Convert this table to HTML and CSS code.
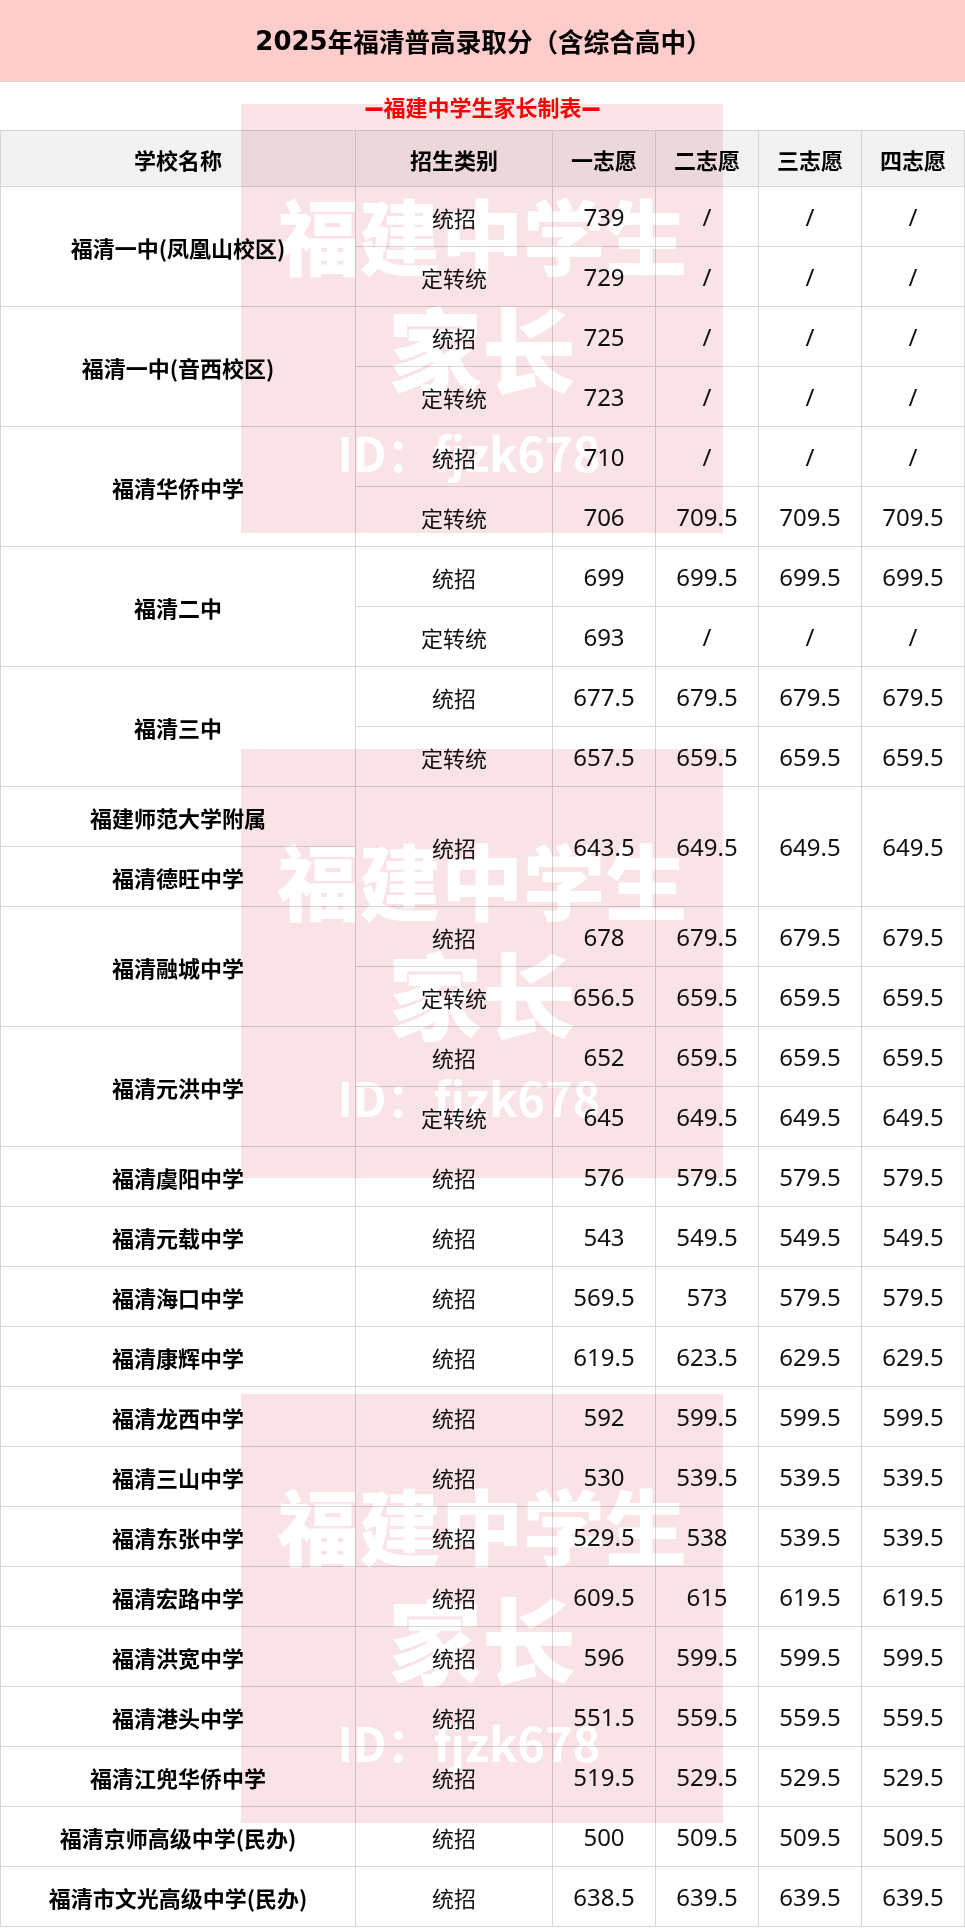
FILE: index.html
```html
<!DOCTYPE html>
<html lang="zh-CN">
<head>
<meta charset="utf-8">
<title>2025年福清普高录取分</title>
<link rel="stylesheet" href="styles.css">
</head>
<body>
<div class="page">
  <div class="title"><span class="title-num">2025</span>年福清普高录取分（含综合高中）</div>
  <div class="subtitle"><span class="dash">—</span>福建中学生家长制表<span class="dash">—</span></div>
  <table class="score">
    <colgroup>
      <col class="c-name"><col class="c-type"><col class="c-num"><col class="c-num"><col class="c-num"><col class="c-num">
    </colgroup>
    <thead>
      <tr><th>学校名称</th><th>招生类别</th><th>一志愿</th><th>二志愿</th><th>三志愿</th><th>四志愿</th></tr>
    </thead>
    <tbody>
      <tr><td class="name" rowspan="2">福清一中(凤凰山校区)</td><td>统招</td><td class="n">739</td><td class="n">/</td><td class="n">/</td><td class="n">/</td></tr>
      <tr><td>定转统</td><td class="n">729</td><td class="n">/</td><td class="n">/</td><td class="n">/</td></tr>
      <tr><td class="name" rowspan="2">福清一中(音西校区)</td><td>统招</td><td class="n">725</td><td class="n">/</td><td class="n">/</td><td class="n">/</td></tr>
      <tr><td>定转统</td><td class="n">723</td><td class="n">/</td><td class="n">/</td><td class="n">/</td></tr>
      <tr><td class="name" rowspan="2">福清华侨中学</td><td>统招</td><td class="n">710</td><td class="n">/</td><td class="n">/</td><td class="n">/</td></tr>
      <tr><td>定转统</td><td class="n">706</td><td class="n">709.5</td><td class="n">709.5</td><td class="n">709.5</td></tr>
      <tr><td class="name" rowspan="2">福清二中</td><td>统招</td><td class="n">699</td><td class="n">699.5</td><td class="n">699.5</td><td class="n">699.5</td></tr>
      <tr><td>定转统</td><td class="n">693</td><td class="n">/</td><td class="n">/</td><td class="n">/</td></tr>
      <tr><td class="name" rowspan="2">福清三中</td><td>统招</td><td class="n">677.5</td><td class="n">679.5</td><td class="n">679.5</td><td class="n">679.5</td></tr>
      <tr><td>定转统</td><td class="n">657.5</td><td class="n">659.5</td><td class="n">659.5</td><td class="n">659.5</td></tr>
      <tr><td class="name">福建师范大学附属</td><td rowspan="2">统招</td><td class="n" rowspan="2">643.5</td><td class="n" rowspan="2">649.5</td><td class="n" rowspan="2">649.5</td><td class="n" rowspan="2">649.5</td></tr>
      <tr><td class="name">福清德旺中学</td></tr>
      <tr><td class="name" rowspan="2">福清融城中学</td><td>统招</td><td class="n">678</td><td class="n">679.5</td><td class="n">679.5</td><td class="n">679.5</td></tr>
      <tr><td>定转统</td><td class="n">656.5</td><td class="n">659.5</td><td class="n">659.5</td><td class="n">659.5</td></tr>
      <tr><td class="name" rowspan="2">福清元洪中学</td><td>统招</td><td class="n">652</td><td class="n">659.5</td><td class="n">659.5</td><td class="n">659.5</td></tr>
      <tr><td>定转统</td><td class="n">645</td><td class="n">649.5</td><td class="n">649.5</td><td class="n">649.5</td></tr>
      <tr><td class="name">福清虞阳中学</td><td>统招</td><td class="n">576</td><td class="n">579.5</td><td class="n">579.5</td><td class="n">579.5</td></tr>
      <tr><td class="name">福清元载中学</td><td>统招</td><td class="n">543</td><td class="n">549.5</td><td class="n">549.5</td><td class="n">549.5</td></tr>
      <tr><td class="name">福清海口中学</td><td>统招</td><td class="n">569.5</td><td class="n">573</td><td class="n">579.5</td><td class="n">579.5</td></tr>
      <tr><td class="name">福清康辉中学</td><td>统招</td><td class="n">619.5</td><td class="n">623.5</td><td class="n">629.5</td><td class="n">629.5</td></tr>
      <tr><td class="name">福清龙西中学</td><td>统招</td><td class="n">592</td><td class="n">599.5</td><td class="n">599.5</td><td class="n">599.5</td></tr>
      <tr><td class="name">福清三山中学</td><td>统招</td><td class="n">530</td><td class="n">539.5</td><td class="n">539.5</td><td class="n">539.5</td></tr>
      <tr><td class="name">福清东张中学</td><td>统招</td><td class="n">529.5</td><td class="n">538</td><td class="n">539.5</td><td class="n">539.5</td></tr>
      <tr><td class="name">福清宏路中学</td><td>统招</td><td class="n">609.5</td><td class="n">615</td><td class="n">619.5</td><td class="n">619.5</td></tr>
      <tr><td class="name">福清洪宽中学</td><td>统招</td><td class="n">596</td><td class="n">599.5</td><td class="n">599.5</td><td class="n">599.5</td></tr>
      <tr><td class="name">福清港头中学</td><td>统招</td><td class="n">551.5</td><td class="n">559.5</td><td class="n">559.5</td><td class="n">559.5</td></tr>
      <tr><td class="name">福清江兜华侨中学</td><td>统招</td><td class="n">519.5</td><td class="n">529.5</td><td class="n">529.5</td><td class="n">529.5</td></tr>
      <tr><td class="name">福清京师高级中学(民办)</td><td>统招</td><td class="n">500</td><td class="n">509.5</td><td class="n">509.5</td><td class="n">509.5</td></tr>
      <tr><td class="name">福清市文光高级中学(民办)</td><td>统招</td><td class="n">638.5</td><td class="n">639.5</td><td class="n">639.5</td><td class="n">639.5</td></tr>
    </tbody>
  </table>

  <div class="wm-layer" aria-hidden="true">
    <div class="wm wm-1"><div class="wm-l1">福建中学生</div><div class="wm-l2">家长</div><div class="wm-l3">ID：fjzk678</div></div>
    <div class="wm wm-2"><div class="wm-l1">福建中学生</div><div class="wm-l2">家长</div><div class="wm-l3">ID：fjzk678</div></div>
    <div class="wm wm-3"><div class="wm-l1">福建中学生</div><div class="wm-l2">家长</div><div class="wm-l3">ID：fjzk678</div></div>
  </div>
</div>
</body>
</html>
```

FILE: styles.css
```css
html, body {
  margin: 0;
  padding: 0;
  background: #ffffff;
}
body {
  font-family: "Noto Sans CJK SC", "Noto Sans", sans-serif;
  color: #111;
}
.page {
  position: relative;
  width: 965px;
  height: 1928px;
  overflow: hidden;
  background: #fff;
}
.title {
  height: 81px;
  background: #ffcccc;
  border-bottom: 1px solid #dcdcdc;
  display: flex;
  align-items: center;
  justify-content: center;
  font-size: 25.6px;
  font-weight: 700;
  color: #000;
  padding-left: 2px;
}
.title-num {
  font-family: "DejaVu Sans", sans-serif;
  font-weight: 700;
  font-size: 26px;
}
.subtitle {
  height: 48px;
  display: flex;
  align-items: center;
  justify-content: center;
  color: #ff0000;
  font-size: 22px;
  font-weight: 700;
}
.dash {
  font-family: "DejaVu Sans", sans-serif;
  font-weight: 700;
  font-size: 19px;
  display: inline-block;
  transform: scaleY(1.5);
}
.score {
  border-collapse: collapse;
  table-layout: fixed;
  width: 963px;
}
.c-name { width: 355px; }
.c-type { width: 197px; }
.c-num { width: 103px; }
.score th,
.score td {
  border: 1px solid #d6d6d6;
  padding: 0;
  text-align: center;
  vertical-align: middle;
  font-size: 22px;
  line-height: 1;
}
.score thead tr { height: 56px; }
.score tbody tr { height: 60px; }
.score th {
  background: #f2f2f2;
  font-weight: 700;
  color: #000;
}
.score td.name {
  font-weight: 700;
  color: #000;
}
.score td.n {
  font-family: "Noto Sans", sans-serif;
  font-size: 24px;
}

/* watermark overlay */
.wm-layer {
  position: absolute;
  inset: 0;
  pointer-events: none;
  mix-blend-mode: multiply;
}
.wm {
  position: absolute;
  left: 241px;
  width: 482px;
  height: 429px;
  background: #f9e3e7;
  color: #ffffff;
  display: flex;
  flex-direction: column;
  align-items: center;
  font-family: "Noto Sans CJK SC", sans-serif;
  font-weight: 900;
  line-height: 1;
  box-sizing: border-box;
  padding-top: 89px;
}
.wm-1 { top: 104px; }
.wm-2 { top: 749px; }
.wm-3 { top: 1394px; }
.wm-l1 { font-size: 82px; }
.wm-l2 { font-size: 94px; margin-top: 25px; }
.wm-l3 { font-size: 47px; margin-top: 34px; font-weight: 700; padding-right: 26px; }
```
